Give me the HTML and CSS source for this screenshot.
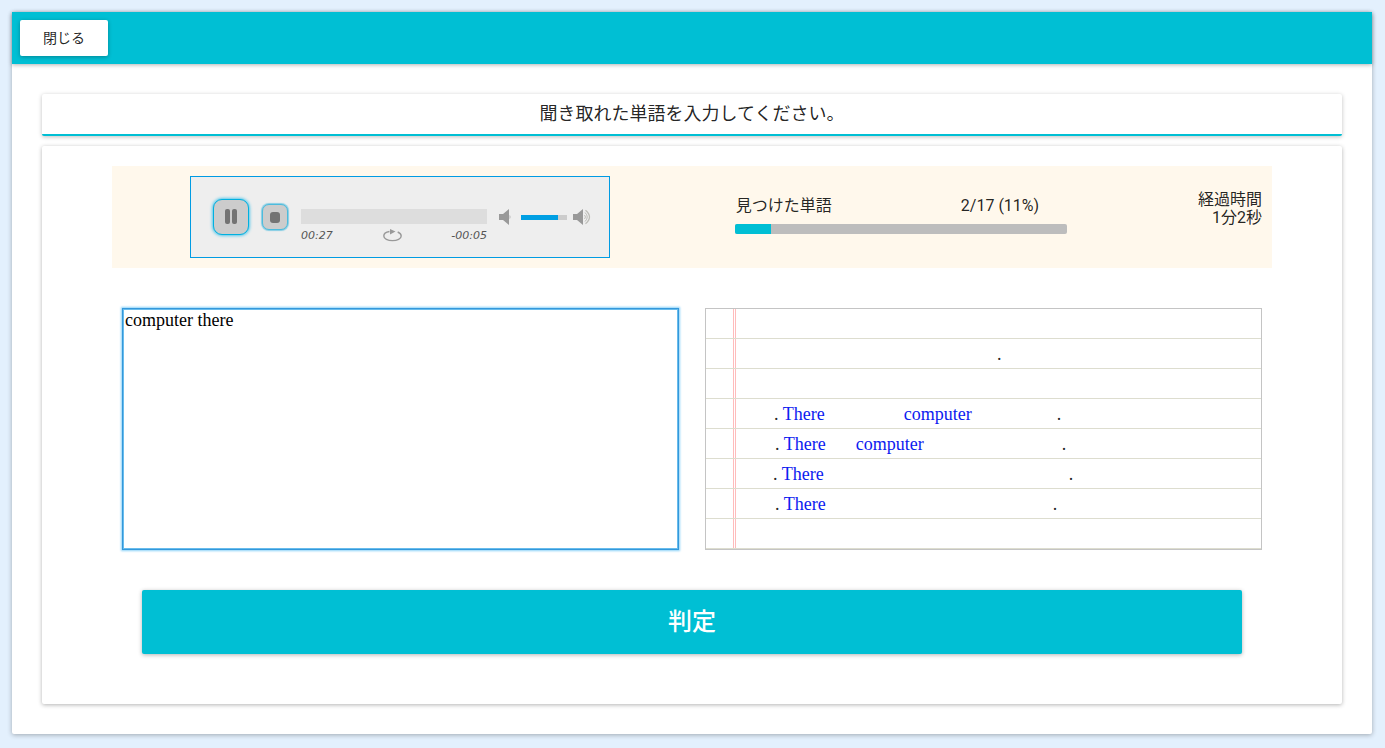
FILE: index.html
```html
<!DOCTYPE html>
<html lang="ja">
<head>
<meta charset="utf-8">
<meta name="viewport" content="width=device-width, initial-scale=1">
<title>リスニング</title>
<link rel="stylesheet" href="styles.css">
</head>
<body>
<div class="card">
  <header class="toolbar"><button class="close" type="button">閉じる</button></header>
  <main class="content">
    <h1 class="instruction"><label for="answer">聞き取れた単語を入力してください。</label></h1>
    <section class="panel">
      <div class="status">
        <div class="player">
          <button class="control play" type="button" aria-label="一時停止">
            <svg width="12" height="16" viewBox="0 0 12 16"><rect width="5" height="15" rx="2"/><rect x="7" width="5" height="15" rx="2"/></svg>
          </button>
          <button class="control stop" type="button" aria-label="停止">
            <svg width="10" height="11" viewBox="0 0 10 11"><rect width="10" height="11" rx="3"/></svg>
          </button>
          <div class="timeline">
            <input class="seek" type="range" value="0" aria-label="再生位置">
            <div class="times">
              <span>00:27</span>
              <button class="icon-button" type="button" aria-label="リピート">
                <svg width="19" height="13" viewBox="0 0 19 13"><path d="M6.500 2.500C3 3.100.8 4.700.8 6.900c0 2.700 3.900 4.700 8.700 4.700s8.700-2 8.700-4.700c0-1.700-1.300-3-3.500-3.900" fill="none" stroke="#999" stroke-width="1.400"/><path d="M7 0l5.500 2.500L7 5.500z" fill="#999"/></svg>
              </button>
              <span>-00:05</span>
            </div>
          </div>
          <div class="volume">
            <button class="icon-button" type="button" aria-label="消音">
              <svg width="12" height="16" viewBox="0 0 12 16"><path d="M0 5h4l6-5v16l-6-5H0z" fill="#999"/><path d="M10.500 6l1 1v2l-1 1z" fill="#bbb"/></svg>
            </button>
            <input class="level" type="range" value="80" aria-label="音量">
            <button class="icon-button" type="button" aria-label="最大音量">
              <svg width="19" height="16" viewBox="0 0 19 16"><path d="M0 5h4l6-5v16l-6-5H0z" fill="#999"/><g fill="none" stroke="#bdbdb8"><path d="M11.500 6q2 2 0 4"/><path d="M12 3.500q4.500 4.500 0 9"/><path d="M12.500 1.300q8 6.700 0 13.400" stroke-width="1.300"/></g></svg>
            </button>
          </div>
        </div>
        <div class="found">
          <div class="found-text"><label for="found-bar">見つけた単語</label><span>2/17 (11%)</span></div>
          <progress class="bar" id="found-bar" value="11" max="100"></progress>
        </div>
        <div class="elapsed"><div>経過時間</div><div>1分2秒</div></div>
      </div>
      <div class="work">
        <textarea class="answer" id="answer" spellcheck="false">computer there</textarea>
        <div class="notebook">
          <div class="line"></div>
          <div class="line"><i style="width:291px"></i><span>.</span></div>
          <div class="line"></div>
          <div class="line"><i style="width:68px"></i><span>. <b>There</b></span><i style="width:79px"></i><b>computer</b><i style="width:85px"></i><span>.</span></div>
          <div class="line"><i style="width:69px"></i><span>. <b>There</b></span><i style="width:30px"></i><b>computer</b><i style="width:138px"></i><span>.</span></div>
          <div class="line"><i style="width:67px"></i><span>. <b>There</b></span><i style="width:245px"></i><span>.</span></div>
          <div class="line"><i style="width:69px"></i><span>. <b>There</b></span><i style="width:227px"></i><span>.</span></div>
          <div class="line"></div>
        </div>
      </div>
      <button class="judge" type="button">判定</button>
    </section>
  </main>
</div>
</body>
</html>
```
FILE: styles.css
```css
* {
  box-sizing: border-box;
}

body {
  margin: 0;
  padding: 12px 13px 14px 12px;
  background: #e3f0fd;
  color: rgba(0, 0, 0, 0.87);
  font: 16px/18px Roboto, "Noto Sans CJK JP", sans-serif;
}

button {
  border: 0;
  padding: 0;
  color: inherit;
  font-family: inherit;
  cursor: pointer;
}

.card,
.instruction,
.panel {
  background: #fff;
  border-radius: 2px;
}

.card {
  box-shadow: 0 1px 5px rgba(0, 0, 0, 0.3);
}

.toolbar {
  display: flex;
  padding: 8px;
  background: #00bfd4;
  box-shadow: 0 1px 4px rgba(0, 0, 0, 0.3);
}

.close {
  width: 88px;
  height: 36px;
  padding-bottom: 3px;
  background: #fff;
  border-radius: 2px;
  box-shadow: 0 1px 4px rgba(0, 0, 0, 0.3);
  font-size: 14px;
}

.content {
  display: flex;
  flex-direction: column;
  gap: 10px;
  padding: 30px;
}

.instruction {
  margin: 0;
  padding: 8px 0;
  border-bottom: 2px solid #00bfd4;
  box-shadow: 0 1px 4px rgba(0, 0, 0, 0.25);
  font-size: 18px;
  font-weight: 400;
  line-height: 24px;
  text-align: center;
}

.panel {
  padding: 20px 70px 50px;
  box-shadow: 0 1px 4px rgba(0, 0, 0, 0.3);
}

.status {
  display: grid;
  grid-template-columns: 576fr 426fr 158fr;
  padding: 10px 0;
  background: #fff8ec;
}

.player {
  display: flex;
  align-items: flex-start;
  justify-self: center;
  width: 420px;
  height: 82px;
  padding: 22px 17px 0 22px;
  border: 1px solid #009be3;
  background: #eee;
}

.control {
  display: grid;
  place-items: center;
  flex: none;
  border: 1px solid #00b0e0;
  background: #ccc;
  fill: #737373;
}

.play {
  width: 36px;
  height: 36px;
  border-radius: 9px;
  box-shadow: 0 0 3px 1px #55c7ea;
}

.stop {
  width: 26px;
  height: 26px;
  margin: 5px 13px 0;
  border-color: #4dbbdc;
  border-radius: 7px;
  box-shadow: 0 0 1px 1px #83cde4;
}

.timeline {
  flex: 1;
  min-width: 0;
  margin-top: 10px;
}

input[type="range"] {
  appearance: none;
  display: block;
  margin: 0;
}

input[type="range"]::-webkit-slider-thumb {
  appearance: none;
  width: 0;
  height: 0;
}

.seek {
  width: 100%;
  height: 15px;
  background: #ddd;
}

.times {
  display: flex;
  align-items: center;
  justify-content: space-between;
  padding-top: 4px;
  color: #555;
  font: italic 11px/15px "DejaVu Sans", sans-serif;
}

.icon-button {
  display: flex;
  background: none;
}

.volume {
  display: flex;
  align-items: center;
  gap: 6px;
  margin: 10px 0 0 12px;
}

.volume .icon-button:first-child {
  margin-right: 4px;
}

.level {
  width: 46px;
  height: 5px;
  background: linear-gradient(to right, #009fe3 80%, #ccc 80%);
}

.found {
  justify-self: center;
  width: 78%;
  padding-top: 21px;
}

.found-text {
  display: flex;
  justify-content: space-between;
  padding: 0 28px 0 1px;
}

.bar {
  appearance: none;
  display: block;
  width: 100%;
  height: 10px;
  margin-top: 9px;
  overflow: hidden;
  border: 0;
  border-radius: 2px;
}

.bar::-webkit-progress-bar {
  background: #bdbdbd;
}

.bar::-webkit-progress-value {
  background: #00bfd4;
}

.elapsed {
  padding: 15px 10px 0 0;
  text-align: right;
}

.work {
  display: grid;
  grid-template-columns: 1fr 1fr;
  gap: 26px;
  padding: 40px 10px;
}

.answer {
  width: 100%;
  height: 100%;
  padding: 1px 2px;
  border: 1px solid #3498db;
  outline: 0;
  resize: none;
  color: #000;
  background: #fff;
  box-shadow: 0 0 2px 1px #8bd2f8, inset 0 0 0 1px #68bcec;
  font: 18px/20px "Liberation Serif", serif;
}

.notebook {
  border: 1px solid #c4c4c4;
  background: linear-gradient(#ffbcbc, #ffbcbc) 27px 0 / 1px 100% no-repeat, linear-gradient(#ffbcbc, #ffbcbc) 29px 0 / 1px 100% no-repeat;
}

.line {
  display: flex;
  height: 30px;
  border-bottom: 1px solid #ddddcf;
  font: 18px/30px "Liberation Serif", serif;
}

.line i {
  flex: none;
}

.line b {
  color: #0c20f0;
  font-weight: 400;
}

.judge {
  display: block;
  width: calc(100% - 60px);
  height: 64px;
  margin: 0 auto;
  padding-bottom: 6px;
  border-radius: 2px;
  background: #00bfd4;
  box-shadow: 0 1px 4px rgba(0, 0, 0, 0.3);
  color: #fff;
  font-size: 24px;
  font-weight: 500;
}
```
